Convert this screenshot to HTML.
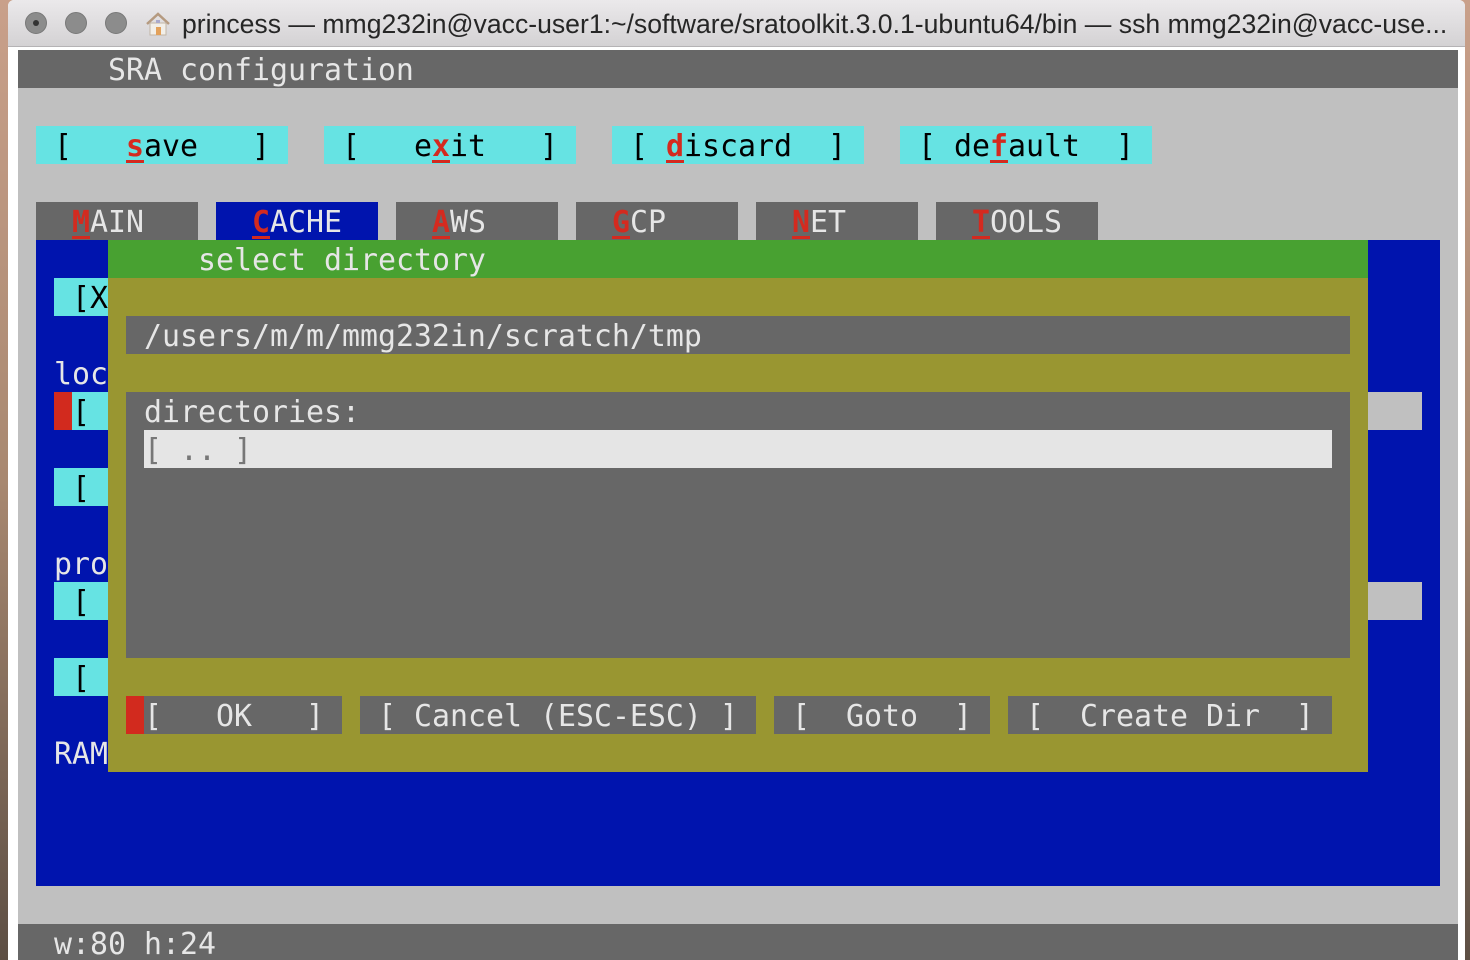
<!DOCTYPE html>
<html><head><meta charset="utf-8"><style>
html,body{margin:0;padding:0;width:1470px;height:960px;overflow:hidden;background:#6b5a4a;}
#desk{position:absolute;left:0;top:0;width:1470px;height:960px;background:linear-gradient(180deg,#c9a08a 0%,#a88870 50%,#5d4f44 100%);}
#win{position:absolute;left:8px;top:0;width:1457px;height:960px;background:#fff;border-radius:6px 6px 0 0;overflow:hidden;}
#tb{position:absolute;left:0;top:0;width:1457px;height:46px;background:linear-gradient(#ebe9eb,#d4d2d4);border-bottom:1px solid #b5b3b5;}
.tl{position:absolute;top:12px;width:22px;height:22px;border-radius:50%;background:#8c8c8c;border:1px solid #787878;box-sizing:border-box;}
#title{position:absolute;left:174px;top:9px;font:26.6px "Liberation Sans",sans-serif;color:#262626;white-space:nowrap;}
#term{position:absolute;left:10px;top:50px;width:1440px;height:910px;background:#c0c0c0;}
.b{position:absolute;}
.t{position:absolute;height:38px;line-height:38px;margin-top:2px;font-family:"DejaVu Sans Mono","Liberation Mono",monospace;font-size:29.9px;white-space:pre;color:#e6e6e6;}
.k{color:#000;}
.h{color:#d42a1f;font-weight:bold;text-decoration:underline;text-decoration-thickness:3px;text-underline-offset:4px;}
</style></head><body>
<div id="desk"></div>
<div id="win">
<div id="tb">
<div class="tl" style="left:17px"><div style="position:absolute;left:7px;top:7px;width:6px;height:6px;border-radius:50%;background:#333"></div></div>
<div class="tl" style="left:57px"></div>
<div class="tl" style="left:97px"></div>
<svg style="position:absolute;left:137px;top:11px" width="26" height="26" viewBox="0 0 26 26"><path d="M2 13 L13 3 L24 13" fill="none" stroke="#b59a80" stroke-width="2.5"/><rect x="5" y="12" width="16" height="12" fill="#f2efe9" stroke="#c2b5a5"/><rect x="11" y="16" width="5" height="8" fill="#e3a15b"/><rect x="11" y="9" width="4" height="3" fill="#aac"/></svg>
<div id="title">princess — mmg232in@vacc-user1:~/software/sratoolkit.3.0.1-ubuntu64/bin — ssh mmg232in@vacc-use...</div>
</div>
<div id="term">
<div class="b" style="left:0;top:0;width:1440px;height:38px;background:#676767"></div>
<div class="t" style="left:90px;top:0">SRA configuration</div>
<div class="b" style="left:18px;top:76px;width:252px;height:38px;background:#66e3e3"></div>
<div class="b" style="left:306px;top:76px;width:252px;height:38px;background:#66e3e3"></div>
<div class="b" style="left:594px;top:76px;width:252px;height:38px;background:#66e3e3"></div>
<div class="b" style="left:882px;top:76px;width:252px;height:38px;background:#66e3e3"></div>
<div class="t k" style="left:18px;top:76px"> [   <span class="h">s</span>ave   ] </div>
<div class="t k" style="left:306px;top:76px"> [   e<span class="h">x</span>it   ] </div>
<div class="t k" style="left:594px;top:76px"> [ <span class="h">d</span>iscard  ] </div>
<div class="t k" style="left:882px;top:76px"> [ de<span class="h">f</span>ault  ] </div>
<div class="b" style="left:18px;top:152px;width:162px;height:38px;background:#676767"></div>
<div class="b" style="left:198px;top:152px;width:162px;height:38px;background:#0014ae"></div>
<div class="b" style="left:378px;top:152px;width:162px;height:38px;background:#676767"></div>
<div class="b" style="left:558px;top:152px;width:162px;height:38px;background:#676767"></div>
<div class="b" style="left:738px;top:152px;width:162px;height:38px;background:#676767"></div>
<div class="b" style="left:918px;top:152px;width:162px;height:38px;background:#676767"></div>
<div class="t" style="left:54px;top:152px"><span class="h">M</span>AIN</div>
<div class="t" style="left:234px;top:152px"><span class="h">C</span>ACHE</div>
<div class="t" style="left:414px;top:152px"><span class="h">A</span>WS</div>
<div class="t" style="left:594px;top:152px"><span class="h">G</span>CP</div>
<div class="t" style="left:774px;top:152px"><span class="h">N</span>ET</div>
<div class="t" style="left:954px;top:152px"><span class="h">T</span>OOLS</div>
<div class="b" style="left:18px;top:190px;width:1404px;height:646px;background:#0014ae"></div>
<div class="b" style="left:36px;top:228px;width:54px;height:38px;background:#66e3e3"></div>
<div class="t k" style="left:54px;top:228px">[X</div>
<div class="t" style="left:36px;top:304px">loc</div>
<div class="b" style="left:36px;top:342px;width:18px;height:38px;background:#d22a1e"></div>
<div class="b" style="left:54px;top:342px;width:36px;height:38px;background:#66e3e3"></div>
<div class="t k" style="left:54px;top:342px">[</div>
<div class="b" style="left:36px;top:418px;width:54px;height:38px;background:#66e3e3"></div>
<div class="t k" style="left:54px;top:418px">[</div>
<div class="t" style="left:36px;top:494px">pro</div>
<div class="b" style="left:36px;top:532px;width:54px;height:38px;background:#66e3e3"></div>
<div class="t k" style="left:54px;top:532px">[</div>
<div class="b" style="left:36px;top:608px;width:54px;height:38px;background:#66e3e3"></div>
<div class="t k" style="left:54px;top:608px">[</div>
<div class="t" style="left:36px;top:684px">RAM</div>
<div class="b" style="left:1350px;top:342px;width:54px;height:38px;background:#c0c0c0"></div>
<div class="b" style="left:1350px;top:532px;width:54px;height:38px;background:#c0c0c0"></div>
<div class="b" style="left:90px;top:190px;width:1260px;height:38px;background:#48a131"></div>
<div class="t" style="left:180px;top:190px">select directory</div>
<div class="b" style="left:90px;top:228px;width:1260px;height:494px;background:#999631"></div>
<div class="b" style="left:108px;top:266px;width:1224px;height:38px;background:#676767"></div>
<div class="t" style="left:126px;top:266px">/users/m/m/mmg232in/scratch/tmp</div>
<div class="b" style="left:108px;top:342px;width:1224px;height:266px;background:#676767"></div>
<div class="t" style="left:126px;top:342px">directories:</div>
<div class="b" style="left:126px;top:380px;width:1188px;height:38px;background:#e5e5e5"></div>
<div class="t" style="left:126px;top:380px;color:#777">[ .. ]</div>
<div class="b" style="left:108px;top:646px;width:216px;height:38px;background:#676767"></div>
<div class="b" style="left:108px;top:646px;width:18px;height:38px;background:#d22a1e"></div>
<div class="t" style="left:126px;top:646px">[   OK   ]</div>
<div class="b" style="left:342px;top:646px;width:396px;height:38px;background:#676767"></div>
<div class="t" style="left:342px;top:646px"> [ Cancel (ESC-ESC) ]</div>
<div class="b" style="left:756px;top:646px;width:216px;height:38px;background:#676767"></div>
<div class="t" style="left:756px;top:646px"> [  Goto  ]</div>
<div class="b" style="left:990px;top:646px;width:324px;height:38px;background:#676767"></div>
<div class="t" style="left:990px;top:646px"> [  Create Dir  ]</div>
<div class="b" style="left:0;top:874px;width:1440px;height:36px;background:#676767"></div>
<div class="t" style="left:36px;top:874px">w:80 h:24</div>
</div>
</div>
</body></html>
